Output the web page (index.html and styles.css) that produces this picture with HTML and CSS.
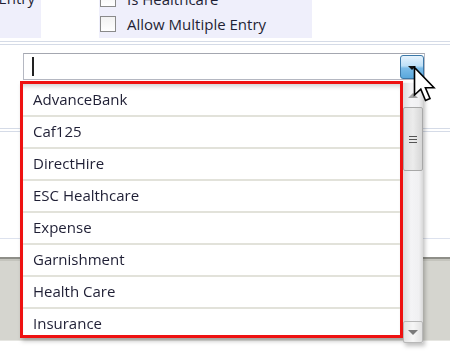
FILE: index.html
```html
<!DOCTYPE html>
<html lang="en">
<head>
    <meta charset="UTF-8">
    <title>Entry Type Lookup</title>
    <link rel="stylesheet" href="styles.css">
</head>
<body>
    <div class="top">
        <div class="label-panel">Entry</div>
        <div class="check-panel">
            <div class="check-list">
                <label class="check-row"><span class="box"></span>Is Healthcare</label>
                <label class="check-row"><span class="box"></span>Allow Multiple Entry</label>
            </div>
        </div>
    </div>
    <div class="rule"></div>

    <div class="combo-row">
        <div class="combo">
            <span class="caret"></span>
            <span class="drop-btn"><span class="tri"></span></span>
        </div>
    </div>

    <div class="rule second"></div>
    <div class="thin-line"></div>
    <div class="footer-band"></div>

    <!-- dropdown popup over the page -->
    <div class="popup">
        <ul class="list">
            <li>AdvanceBank</li>
            <li>Caf125</li>
            <li>DirectHire</li>
            <li>ESC Healthcare</li>
            <li>Expense</li>
            <li>Garnishment</li>
            <li>Health Care</li>
            <li>Insurance</li>
        </ul>
        <div class="scrollbar">
            <div class="sb-btn"><span class="sb-up"></span></div>
            <div class="sb-thumb"><span class="grip"></span><span class="grip"></span><span class="grip"></span></div>
            <div class="sb-track"></div>
            <div class="sb-btn down"><span class="sb-down"></span></div>
        </div>
    </div>

    <svg class="cursor" width="24" height="38" viewBox="0 0 24 38">
        <path d="M1.5 1.5 L1.5 29 L7.8 23.2 L12.5 34.5 L17 32.5 L12.4 21.8 L21 21.8 Z" fill="#fff" stroke="#000" stroke-width="1.6" stroke-linejoin="miter"/>
    </svg>
</body>
</html>
```

FILE: styles.css
```css
body {
    margin: 0;
    width: 450px;
    height: 353px;
    overflow: hidden;
    position: relative;
    background: #fff;
    font-family: "Open Sans", "Liberation Sans", sans-serif;
    font-size: 15px;
    color: #1f1f35;
}
.top {
    display: flex;
    height: 38px;
}
.label-panel {
    width: 41px;
    height: 52px;
    margin-top: -14px;
    box-sizing: border-box;
    padding-right: 6px;
    background: #efeffb;
    line-height: 25px;
    text-align: right;
    white-space: nowrap;
    overflow: hidden;
    direction: rtl;
}
.check-panel {
    margin-left: 58px;
    width: 213px;
    background: #efeffb;
    overflow: hidden;
}
.check-list {
    margin-top: -14px;
}
.check-row {
    display: flex;
    align-items: center;
    height: 25px;
    padding-left: 1px;
}
.box {
    width: 14px;
    height: 14px;
    border: 1px solid #8a8a8a;
    background: linear-gradient(#f2f2f2, #fff);
    margin-right: 11px;
}
.rule {
    margin-top: 3px;
    height: 2px;
    border-top: 1px solid #d5dbe7;
    border-bottom: 1px solid #d5dbe7;
}
.combo-row {
    padding-top: 8px;
    padding-left: 23px;
}
.combo {
    width: 402px;
    height: 27px;
    box-sizing: border-box;
    border: 1px solid #b5b8c2;
    border-top-color: #a4a7b0;
    display: flex;
    align-items: center;
    justify-content: space-between;
    padding: 0 0 0 8px;
}
.caret {
    width: 2px;
    height: 19px;
    background: #222;
}
.drop-btn {
    width: 24px;
    height: 24px;
    box-sizing: border-box;
    border: 1px solid #3b78a8;
    border-radius: 3px;
    background: linear-gradient(#e6f3fd 0%, #bfe0f7 45%, #7cbce8 55%, #5aa8dc 100%);
    display: flex;
    justify-content: center;
    padding-top: 10px;
}
.tri {
    width: 0;
    height: 0;
    border-left: 4px solid transparent;
    border-right: 4px solid transparent;
    border-top: 4px solid #111;
}
.rule.second {
    margin-top: 48px;
}
.thin-line {
    margin-top: 106px;
    height: 1px;
    background: #dde2ee;
}
.footer-band {
    margin-top: 18px;
    height: 81px;
    border-top: 2px solid #8e8e88;
    background: linear-gradient(#c4c4bd 0, #c4c4bd 2px, #d5d5cf 2px);
    border-bottom: 1px solid #e6e6e2;
}
.popup {
    position: absolute;
    left: 20px;
    top: 81px;
    display: flex;
    align-items: flex-start;
    filter: drop-shadow(2px 3px 2px rgba(0, 0, 0, 0.25));
}
.list {
    margin: 0;
    padding: 1px 0 0;
    list-style: none;
    width: 383px;
    height: 257px;
    box-sizing: border-box;
    border: 3px solid #ee1111;
    background: #fff;
    overflow: hidden;
    box-shadow: inset 0 5px 5px -3px rgba(0, 0, 0, 0.2);
}
.list li {
    height: 30px;
    line-height: 28px;
    padding-left: 10px;
    border-bottom: 2px solid #e2e2da;
}
.scrollbar {
    margin-top: 2px;
    width: 20px;
    height: 260px;
    display: flex;
    flex-direction: column;
    background: linear-gradient(90deg, #dcdcdc, #f4f4f6 40%, #f0f0f2 80%, #d8d8d8);
}
.sb-btn {
    height: 24px;
    display: flex;
    justify-content: center;
    align-items: center;
}
.sb-btn.down {
    height: 20px;
    border: 1px solid #b8b8b8;
    border-radius: 2px;
    background: linear-gradient(90deg, #e4e4e4, #f6f6f6 50%, #e2e2e2);
}
.sb-up {
    border-left: 5px solid transparent;
    border-right: 5px solid transparent;
    border-bottom: 5px solid #a0a0a0;
}
.sb-down {
    border-left: 5px solid transparent;
    border-right: 5px solid transparent;
    border-top: 5px solid #7a7a7a;
}
.sb-thumb {
    height: 64px;
    box-sizing: border-box;
    border: 1px solid #a8a8a8;
    border-radius: 2px;
    background: linear-gradient(90deg, #dedede, #ececec 50%, #d6d6d6);
    display: flex;
    flex-direction: column;
    justify-content: center;
    align-items: center;
    gap: 2px;
}
.grip {
    width: 8px;
    height: 1px;
    background: #555;
}
.sb-track {
    flex: 1;
}
.cursor {
    position: absolute;
    left: 413px;
    top: 66px;
}
```
